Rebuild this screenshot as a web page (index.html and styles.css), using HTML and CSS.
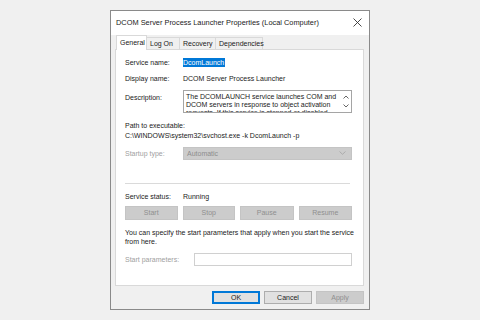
FILE: index.html
```html
<!DOCTYPE html>
<html>
<head>
<meta charset="utf-8">
<link rel="stylesheet" href="styles.css">
</head>
<body>
<div class="dialog">
  <div class="titlebar">
    <span class="title">DCOM Server Process Launcher Properties (Local Computer)</span>
    <svg class="close" width="9" height="9" viewBox="0 0 9 9"><path d="M0.5 0.5L8.5 8.5M8.5 0.5L0.5 8.5" stroke="#333" stroke-width="0.9" fill="none"/></svg>
  </div>
  <div class="body">
    <div class="tabs">
      <div class="tab active">General</div>
      <div class="tab">Log On</div>
      <div class="tab">Recovery</div>
      <div class="tab">Dependencies</div>
    </div>
    <div class="panel">
      <div class="row r-name">
        <span class="label">Service name:</span>
        <span class="value"><span class="sel">DcomLaunch</span></span>
      </div>
      <div class="row r-display">
        <span class="label">Display name:</span>
        <span class="value">DCOM Server Process Launcher</span>
      </div>
      <div class="row r-desc">
        <span class="label">Description:</span>
        <div class="descbox">
          <div class="desctext">The DCOMLAUNCH service launches COM and DCOM servers in response to object activation requests. If this service is stopped or disabled</div>
          <div class="scroll">
            <svg width="6" height="4" viewBox="0 0 6 4"><path d="M0.5 3.5L3 1L5.5 3.5" stroke="#555" stroke-width="0.9" fill="none"/></svg>
            <svg width="6" height="4" viewBox="0 0 6 4"><path d="M0.5 0.5L3 3L5.5 0.5" stroke="#555" stroke-width="0.9" fill="none"/></svg>
          </div>
        </div>
      </div>
      <div class="path-label">Path to executable:</div>
      <div class="path">C:\WINDOWS\system32\svchost.exe -k DcomLaunch -p</div>
      <div class="row r-startup">
        <span class="label disabled">Startup type:</span>
        <div class="combo">
          <span>Automatic</span>
          <svg width="7" height="4" viewBox="0 0 7 4"><path d="M0.5 0.5L3.5 3.3L6.5 0.5" stroke="#a8a8a8" stroke-width="0.9" fill="none"/></svg>
        </div>
      </div>
      <div class="sep"></div>
      <div class="row r-status">
        <span class="label">Service status:</span>
        <span class="value">Running</span>
      </div>
      <div class="btnrow">
        <div class="btn disabled">Start</div>
        <div class="btn disabled">Stop</div>
        <div class="btn disabled">Pause</div>
        <div class="btn disabled">Resume</div>
      </div>
      <div class="note">You can specify the start parameters that apply when you start the service from here.</div>
      <div class="row r-params">
        <span class="label disabled wide">Start parameters:</span>
        <div class="input"></div>
      </div>
    </div>
    <div class="footer">
      <div class="btn fbtn ok">OK</div>
      <div class="btn fbtn">Cancel</div>
      <div class="btn fbtn disabled">Apply</div>
    </div>
  </div>
</div>
</body>
</html>
```
FILE: styles.css
```css
html, body {
  margin: 0;
  padding: 0;
}
body {
  width: 480px;
  height: 320px;
  background: #f0f0f0;
  display: flex;
  align-items: center;
  justify-content: center;
  font-family: "Liberation Sans", Arial, sans-serif;
  font-size: 7px;
  color: #1a1a1a;
}
.dialog {
  width: 258px;
  height: 298px;
  border: 1px solid #8a8a8a;
  background: #f0f0f0;
  display: flex;
  flex-direction: column;
  margin-top: -1px;
}
.titlebar {
  height: 23px;
  background: #ffffff;
  display: flex;
  align-items: center;
  justify-content: space-between;
  padding: 0 6px 1px 5px;
}
.title {
  font-size: 7.4px;
  color: #1a1a1a;
}
.close {
  margin-right: 1px;
}
.body {
  flex: 1;
  display: flex;
  flex-direction: column;
  padding: 0 5px 0 4px;
}
.tabs {
  height: 14px;
  display: flex;
  align-items: flex-end;
  padding-left: 1px;
}
.tab {
  height: 12px;
  line-height: 12px;
  padding: 0 3px;
  border: 1px solid #d9d9d9;
  border-bottom: none;
  background: #f0f0f0;
  margin-left: -1px;
  box-sizing: border-box;
  font-size: 7px;
}
.tab.active {
  line-height: 13px;
  background: #ffffff;
  margin-left: 0;
  position: relative;
  z-index: 1;
  margin-bottom: -1px;
  height: 15px;
  width: 31px;
}
.tab:nth-child(2) { width: 34px; }
.tab:nth-child(3) { width: 37px; }
.tab:nth-child(4) { width: 48px; }
.panel {
  height: 237px;
  box-sizing: border-box;
  background: #ffffff;
  border: 1px solid #d9d9d9;
  padding: 7px 11px 0 9px;
  display: flex;
  flex-direction: column;
}
.row {
  display: flex;
  align-items: center;
}
.label {
  width: 58px;
  flex: none;
}
.label.wide {
  width: 69px;
}
.disabled {
  color: #a0a0a0;
}
.r-name {
  height: 10px;
  margin-top: 1px;
}
.sel {
  background: #0078d7;
  color: #fff;
  padding: 1px 1px 1px 0;
}
.r-display {
  height: 10px;
  margin-top: 6px;
}
.r-desc {
  margin-top: 6px;
  align-items: flex-start;
}
.r-desc .label {
  margin-top: 4px;
}
.descbox {
  width: 170px;
  height: 23px;
  box-sizing: border-box;
  border: 1px solid #a5a5a5;
  display: flex;
  overflow: hidden;
}
.desctext {
  flex: 1;
  padding: 2px 2px 0 2px;
  line-height: 8.3px;
}
.scroll {
  width: 10px;
  display: flex;
  flex-direction: column;
  align-items: center;
  padding-top: 4px;
  gap: 5px;
}
.path-label {
  margin-top: 8px;
  height: 10px;
  line-height: 10px;
}
.path {
  height: 10px;
  line-height: 10px;
}
.r-startup {
  margin-top: 6px;
}
.combo {
  width: 171px;
  height: 13px;
  box-sizing: border-box;
  background: #cccccc;
  border: 1px solid #c4c4c4;
  display: flex;
  align-items: center;
  justify-content: space-between;
  padding: 0 5px 0 3px;
  color: #8c8c8c;
}
.sep {
  height: 1px;
  background: #dadada;
  margin: 23px 2px 0 0;
}
.r-status {
  margin-top: 8px;
  height: 10px;
}
.btnrow {
  margin-top: 4px;
  display: flex;
  gap: 5px;
}
.btn {
  height: 14px;
  box-sizing: border-box;
  border: 1px solid #c4c4c4;
  background: #e1e1e1;
  display: flex;
  align-items: center;
  justify-content: center;
}
.btnrow .btn {
  width: 53px;
}
.btnrow .btn:nth-child(3), .btnrow .btn:nth-child(4) {
  width: 54px;
}
.btn.disabled {
  background: #cccccc;
  border-color: #c4c4c4;
  color: #8f8f8f;
}
.note {
  margin-top: 8px;
  line-height: 9px;
  width: 236px;
}
.r-params {
  margin-top: 7px;
}
.input {
  width: 159px;
  height: 13px;
  box-sizing: border-box;
  border: 1px solid #d0d0d0;
  background: #fff;
}
.footer {
  display: flex;
  justify-content: flex-end;
  gap: 4px;
  margin-top: 5px;
}
.fbtn {
  width: 48px;
  height: 13px;
  border-color: #adadad;
}
.fbtn.ok {
  border: 1px solid #0078d7;
  box-shadow: inset 0 0 0 1px #0078d7;
}
.fbtn.disabled {
  background: #cccccc;
  border-color: #c4c4c4;
}
```
